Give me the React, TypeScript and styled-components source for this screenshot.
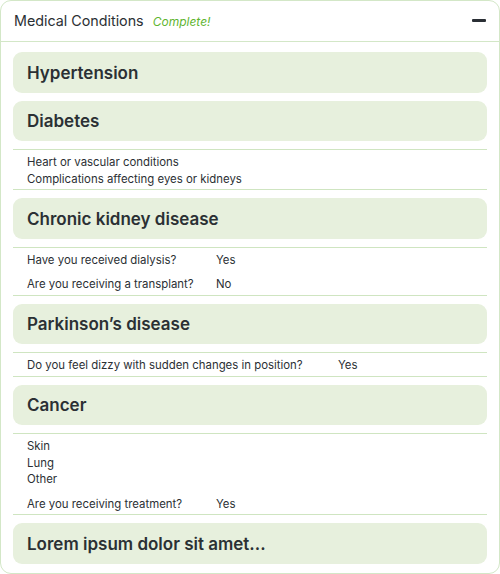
import React from "react";
import styled, { createGlobalStyle } from "styled-components";

const FONT = `"Inter", "Noto Sans", sans-serif`;

const Global = createGlobalStyle`
  html, body { margin: 0; padding: 0; background: #ffffff; }
  body { font-family: ${FONT}; color: #2b3034; }
  * { box-sizing: border-box; }
`;

const Card = styled.section`
  width: 500px;
  height: 574px;
  border: 1px solid #d3e7c7;
  border-radius: 11px;
  background: #fff;
  overflow: hidden;
  display: flex;
  flex-direction: column;
`;

const Header = styled.header`
  height: 41px;
  flex: none;
  display: flex;
  align-items: center;
  padding: 0 12px 1px 13px;
  border-bottom: 1px solid #d3e7c7;
`;

const Title = styled.h2`
  margin: 0;
  font-size: 14.3px;
  font-weight: 400;
  color: #2b3034;
`;

const Status = styled.span`
  margin-left: 9px;
  font-size: 12px;
  font-style: italic;
  color: #5fb531;
  flex: 1;
  padding-top: 1px;
`;

const Collapse = styled.button`
  width: 16px;
  height: 16px;
  padding: 0;
  border: 0;
  background: transparent;
  display: flex;
  align-items: center;
  justify-content: center;
  cursor: pointer;
  &::before {
    content: "";
    width: 14px;
    height: 3px;
    border-radius: 1px;
    background: #2a2f35;
  }
`;

const Body = styled.div`
  display: flex;
  flex-direction: column;
  gap: 8px;
  padding: 10px 12px 0 12px;
`;

const Section = styled.div`
  display: flex;
  flex-direction: column;
  gap: 8px;
`;

const Condition = styled.div`
  height: 40.5px;
  border-radius: 9px;
  background: #e7f0dd;
  display: flex;
  align-items: center;
  padding: 1px 0 0 14px;
  font-size: 17px;
  font-weight: 600;
  color: #2b3034;
`;

const Details = styled.div`
  border-top: 1px solid #cfe5c1;
  border-bottom: 1px solid #cfe5c1;
  padding: 4px 14px 2px;
  display: flex;
  flex-direction: column;
  gap: 8px;
  font-size: 11.4px;
  line-height: 16.5px;
  color: #2b3034;
`;

const List = styled.ul`
  list-style: none;
  margin: 0;
  padding: 0;
`;

const QA = styled.div<{ $labelWidth: number }>`
  display: grid;
  grid-template-columns: ${(p) => p.$labelWidth}px auto;
  row-gap: 8px;
`;

type Item = {
  name: string;
  list?: string[];
  qa?: [string, string][];
  labelWidth?: number;
};

const items: Item[] = [
  { name: "Hypertension" },
  {
    name: "Diabetes",
    list: ["Heart or vascular conditions", "Complications affecting eyes or kidneys"],
  },
  {
    name: "Chronic kidney disease",
    qa: [
      ["Have you received dialysis?", "Yes"],
      ["Are you receiving a transplant?", "No"],
    ],
  },
  {
    name: "Parkinson\u2019s disease",
    qa: [["Do you feel dizzy with sudden changes in position?", "Yes"]],
    labelWidth: 311,
  },
  {
    name: "Cancer",
    list: ["Skin", "Lung", "Other"],
    qa: [["Are you receiving treatment?", "Yes"]],
  },
  { name: "Lorem ipsum dolor sit amet..." },
];

export default function App() {
  return (
    <>
      <Global />
      <Card>
        <Header>
          <Title>Medical Conditions</Title>
          <Status>Complete!</Status>
          <Collapse aria-label="Collapse" />
        </Header>
        <Body>
          {items.map((it) => (
            <Section key={it.name}>
              <Condition>{it.name}</Condition>
              {(it.list || it.qa) && (
                <Details>
                  {it.list && (
                    <List>
                      {it.list.map((l) => (
                        <li key={l}>{l}</li>
                      ))}
                    </List>
                  )}
                  {it.qa && (
                    <QA $labelWidth={it.labelWidth ?? 189}>
                      {it.qa.map(([q, a]) => (
                        <React.Fragment key={q}>
                          <span>{q}</span>
                          <span>{a}</span>
                        </React.Fragment>
                      ))}
                    </QA>
                  )}
                </Details>
              )}
            </Section>
          ))}
        </Body>
      </Card>
    </>
  );
}
